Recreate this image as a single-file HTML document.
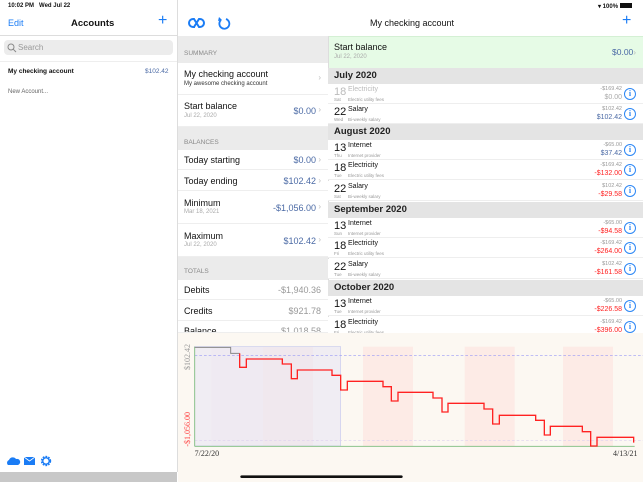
<!DOCTYPE html><html><head><meta charset="utf-8"><style>
*{margin:0;padding:0;box-sizing:border-box}
body{width:643px;height:482px;position:relative;overflow:hidden;background:#fff;font-family:"Liberation Sans",sans-serif;color:#111}
.a{position:absolute;white-space:nowrap}
.blue{color:#1a7cf5}
.sh{position:absolute;left:178px;width:150px;background:#ebebeb;font-size:6.5px;color:#888;padding-left:6px}
.mr{position:absolute;left:178px;width:150px;background:#fff;border-bottom:1px solid #eee}
.mr .t{position:absolute;left:6px;font-size:9px}
.mr .s{position:absolute;left:6px;font-size:6px;color:#aaa}
.mr .v{position:absolute;right:12px;font-size:9px;color:#4b6aa5}
.mr .c{position:absolute;right:7px;font-size:8px;color:#bbb}
.mh{position:absolute;left:328px;width:315px;background:#e4e4e4;font-size:9.5px;font-weight:bold;color:#222;padding-left:6px;height:16px;line-height:15px}
.rr{position:absolute;left:328px;width:315px;height:20px;background:#fff;border-bottom:1px solid #eee}
.rr .d{position:absolute;left:6px;top:2px;font-size:11px}
.rr .n{position:absolute;left:20px;top:2px;font-size:7px}
.rr .w{position:absolute;left:6px;top:13px;font-size:4.5px;color:#999}
.rr .e{position:absolute;left:20px;top:13px;font-size:4.5px;color:#999}
.rr .m{position:absolute;right:21px;top:2px;font-size:5.5px;color:#999}
.rr .b{position:absolute;right:21px;top:10px;font-size:7px}
.rr .i{position:absolute;left:296px;top:4px;width:12px;height:12px;border:1.3px solid #2b86f5;border-radius:50%;color:#2b86f5;font-size:8px;line-height:9px;text-align:center;font-weight:bold;font-family:"Liberation Serif",serif}
.f .d,.f .n{color:#bbb}
.red{color:#f22}.bv{color:#4b6aa5}
</style></head><body>
<div class="a" style="left:8px;top:3px;font-size:6px;font-weight:bold">10:02 PM&nbsp;&nbsp; Wed Jul 22</div>
<div class="a blue" style="left:8px;top:18px;font-size:9px">Edit</div>
<div class="a" style="left:71px;top:18px;font-size:9.5px;font-weight:bold">Accounts</div>
<div class="a blue" style="left:158px;top:12px;font-size:16px">+</div>
<div class="a" style="left:0;top:35px;width:177px;height:1px;background:#ddd"></div>
<div class="a" style="left:4px;top:40px;width:169px;height:15px;background:#ececec;border-radius:4px"></div>
<svg class="a" style="left:7px;top:43px" width="10" height="10"><circle cx="4" cy="4" r="3" fill="none" stroke="#888" stroke-width="1"/><line x1="6.2" y1="6.2" x2="9" y2="9" stroke="#888"/></svg>
<div class="a" style="left:18px;top:43px;font-size:8px;color:#999">Search</div>
<div class="a" style="left:0;top:61px;width:177px;height:1px;background:#eee"></div>
<div class="a" style="left:8px;top:68px;font-size:6.5px;font-weight:bold">My checking account</div>
<div class="a" style="left:145px;top:68px;font-size:6.5px;color:#4b6aa5">$102.42</div>
<div class="a" style="left:8px;top:89px;font-size:6px;color:#666">New Account...</div>
<svg class="a" style="left:7px;top:454px" width="48" height="13">
<path d="M1 11 a3 3 0 0 1 1-5 a4 4 0 0 1 7-1 a3 3 0 0 1 2 6z" fill="#1a7cf5"/>
<rect x="17" y="3" width="11" height="8" fill="#1a7cf5"/><path d="M17 3 l5.5 4 l5.5-4" stroke="#fff" fill="none" stroke-width="0.8"/>
<circle cx="39" cy="7" r="4" fill="none" stroke="#1a7cf5" stroke-width="2.4" stroke-dasharray="1.6 1"/><circle cx="39" cy="7" r="3.2" fill="none" stroke="#1a7cf5" stroke-width="1.3"/>
</svg>
<div class="a" style="left:0;top:472px;width:177px;height:10px;background:#c8c8c8"></div>
<div class="a" style="left:177px;top:0;width:1px;height:472px;background:#ddd"></div>
<svg class="a" style="left:186px;top:16px" width="46" height="14">
<path d="M7 3 a4 4 0 1 0 0 8 h2 M9 3 a4 4 0 0 1 0 0 M7 3 h1 l5 8 h1 a4 4 0 1 0 0-8 h-1 l-5 8" fill="none" stroke="#1a7cf5" stroke-width="2"/>
<path d="M40 3 a5 5 0 1 1 -5 1" fill="none" stroke="#1a7cf5" stroke-width="1.8"/><path d="M33 1 l3 3 l-4 1z" fill="#1a7cf5"/>
</svg>
<div class="a" style="left:370px;top:18px;font-size:9px">My checking account</div>
<div class="a" style="left:598px;top:3px;font-size:6px;font-weight:bold">▾ 100% <span style="display:inline-block;width:12px;height:5px;background:#111"></span></div>
<div class="a blue" style="left:622px;top:12px;font-size:16px">+</div>
<div class="a" style="left:178px;top:36px;width:150px;height:297px;background:#ebebeb"></div>
<div class="sh" style="top:50px">SUMMARY</div>
<div class="mr" style="top:63px;height:32px"><div class="t" style="top:6px">My checking account</div><div class="s" style="top:18px;color:#333">My awesome checking account</div><div class="c" style="top:10px">›</div></div>
<div class="mr" style="top:95px;height:32px"><div class="t" style="top:6px">Start balance</div><div class="s" style="top:18px">Jul 22, 2020</div><div class="v" style="top:11px">$0.00</div><div class="c" style="top:10px">›</div></div>
<div class="sh" style="top:139px">BALANCES</div>
<div class="mr" style="top:150px;height:20px"><div class="t" style="top:5px">Today starting</div><div class="v" style="top:5px">$0.00</div><div class="c" style="top:5px">›</div></div>
<div class="mr" style="top:170px;height:21px"><div class="t" style="top:6px">Today ending</div><div class="v" style="top:6px">$102.42</div><div class="c" style="top:6px">›</div></div>
<div class="mr" style="top:191px;height:33px"><div class="t" style="top:7px">Minimum</div><div class="s" style="top:18px">Mar 18, 2021</div><div class="v red" style="top:12px">-$1,056.00</div><div class="c" style="top:11px">›</div></div>
<div class="mr" style="top:224px;height:33px"><div class="t" style="top:7px">Maximum</div><div class="s" style="top:18px">Jul 22, 2020</div><div class="v" style="top:12px">$102.42</div><div class="c" style="top:11px">›</div></div>
<div class="sh" style="top:268px">TOTALS</div>
<div class="mr" style="top:280px;height:20px"><div class="t" style="top:5px">Debits</div><div class="v" style="top:5px;right:7px;color:#999">-$1,940.36</div></div>
<div class="mr" style="top:300px;height:21px"><div class="t" style="top:6px">Credits</div><div class="v" style="top:6px;right:7px;color:#999">$921.78</div></div>
<div class="mr" style="top:321px;height:12px;overflow:hidden"><div class="t" style="top:5px">Balance</div><div class="v" style="top:5px;right:7px;color:#999">$1,018.58</div></div>
<div class="a" style="left:328px;top:36px;width:1px;height:297px;background:#ddd"></div>
<div class="a" style="left:329px;top:36px;width:314px;height:32px;background:#e6fbe6;border-top:1px solid #d4f0d4"></div>
<div class="a" style="left:334px;top:42px;font-size:9px">Start balance</div>
<div class="a" style="left:334px;top:54px;font-size:6px;color:#aaa">Jul 22, 2020</div>
<div class="a" style="left:612px;top:47px;font-size:8.5px;color:#4b6aa5">$0.00<span style="color:#bbb">›</span></div>
<div style="position:absolute;left:0;top:0;width:643px;height:333px;overflow:hidden">
<div class="mh" style="top:68px">July 2020</div>
<div class="rr f" style="top:84px"><div class="d">18</div><div class="n">Electricity</div><div class="w">Sat</div><div class="e">Electric utility fees</div><div class="m">-$169.42</div><div class="b" style="color:#aaa">$0.00</div><div class="i">i</div></div>
<div class="rr" style="top:104px"><div class="d">22</div><div class="n">Salary</div><div class="w">Wed</div><div class="e">Bi-weekly salary</div><div class="m">$102.42</div><div class="b bv">$102.42</div><div class="i">i</div></div>
<div class="mh" style="top:124px">August 2020</div>
<div class="rr" style="top:140px"><div class="d">13</div><div class="n">Internet</div><div class="w">Thu</div><div class="e">Internet provider</div><div class="m">-$65.00</div><div class="b bv">$37.42</div><div class="i">i</div></div>
<div class="rr" style="top:160px"><div class="d">18</div><div class="n">Electricity</div><div class="w">Tue</div><div class="e">Electric utility fees</div><div class="m">-$169.42</div><div class="b red">-$132.00</div><div class="i">i</div></div>
<div class="rr" style="top:181px"><div class="d">22</div><div class="n">Salary</div><div class="w">Sat</div><div class="e">Bi-weekly salary</div><div class="m">$102.42</div><div class="b red">-$29.58</div><div class="i">i</div></div>
<div class="mh" style="top:202px">September 2020</div>
<div class="rr" style="top:218px"><div class="d">13</div><div class="n">Internet</div><div class="w">Sun</div><div class="e">Internet provider</div><div class="m">-$65.00</div><div class="b red">-$94.58</div><div class="i">i</div></div>
<div class="rr" style="top:238px"><div class="d">18</div><div class="n">Electricity</div><div class="w">Fri</div><div class="e">Electric utility fees</div><div class="m">-$169.42</div><div class="b red">-$264.00</div><div class="i">i</div></div>
<div class="rr" style="top:259px"><div class="d">22</div><div class="n">Salary</div><div class="w">Tue</div><div class="e">Bi-weekly salary</div><div class="m">$102.42</div><div class="b red">-$161.58</div><div class="i">i</div></div>
<div class="mh" style="top:280px">October 2020</div>
<div class="rr" style="top:296px"><div class="d">13</div><div class="n">Internet</div><div class="w">Tue</div><div class="e">Internet provider</div><div class="m">-$65.00</div><div class="b red">-$226.58</div><div class="i">i</div></div>
<div class="rr" style="top:317px"><div class="d">18</div><div class="n">Electricity</div><div class="w">Fri</div><div class="e">Electric utility fees</div><div class="m">-$169.42</div><div class="b red">-$396.00</div><div class="i">i</div></div>
</div>
<svg class="a" style="left:178px;top:333px" width="465" height="149" viewBox="0 9 1395 447">
<rect x="0" y="0" width="1395" height="456" fill="#fcf8f2"/>
<g fill="#fdebe6"><rect x="100" y="50" width="155" height="298" fill="#fbf1f0"/><rect x="255" y="50" width="150" height="298"/><rect x="555" y="50" width="150" height="298"/><rect x="860" y="50" width="150" height="298"/><rect x="1155" y="50" width="150" height="298"/></g>
<rect x="50" y="50" width="438" height="298" fill="#e8e6f4" fill-opacity="0.6" stroke="#c8cbee" stroke-width="2"/>
<line x1="50" y1="77" x2="1395" y2="77" stroke="#9a9af5" stroke-width="2" stroke-dasharray="8 6"/>
<line x1="50" y1="332" x2="1395" y2="332" stroke="#dcd0f0" stroke-width="2" stroke-dasharray="8 6"/>
<line x1="50" y1="50" x2="50" y2="349" stroke="#8cc48c" stroke-width="3"/>
<line x1="50" y1="349" x2="1370" y2="349" stroke="#8cc48c" stroke-width="3"/>
<polyline points="50,52 158,52 158,70 185,70" fill="none" stroke="#888" stroke-width="3"/>
<polyline points="185,70 185,112 205,112 205,87 313,87 313,102 340,102 340,146 358,146 358,120 462,120 462,136 488,136 488,180 508,180 508,154 615,154 615,170 640,170 640,213 660,213 660,187 765,187 765,204 792,204 792,246 810,246 810,220 918,220 918,237 944,237 944,282 964,282 964,256 1073,256 1073,271 1099,271 1099,315 1117,315 1117,289 1213,289 1213,305 1238,305 1238,348 1257,348 1257,322 1367,322 1367,338" fill="none" stroke="#f22" stroke-width="4"/>
<text transform="translate(36,120) rotate(-90)" font-size="24" fill="#999" font-family="Liberation Serif">$102.42</text>
<text transform="translate(36,350) rotate(-90)" font-size="24" fill="#f44" font-family="Liberation Serif">-$1,056.00</text>
<text x="50" y="378" font-size="24" fill="#333" font-family="Liberation Serif">7/22/20</text>
<text x="1305" y="378" font-size="24" fill="#333" font-family="Liberation Serif">4/13/21</text>
<rect x="187" y="436" width="487" height="8" rx="4" fill="#111"/>
</svg>
</body></html>
